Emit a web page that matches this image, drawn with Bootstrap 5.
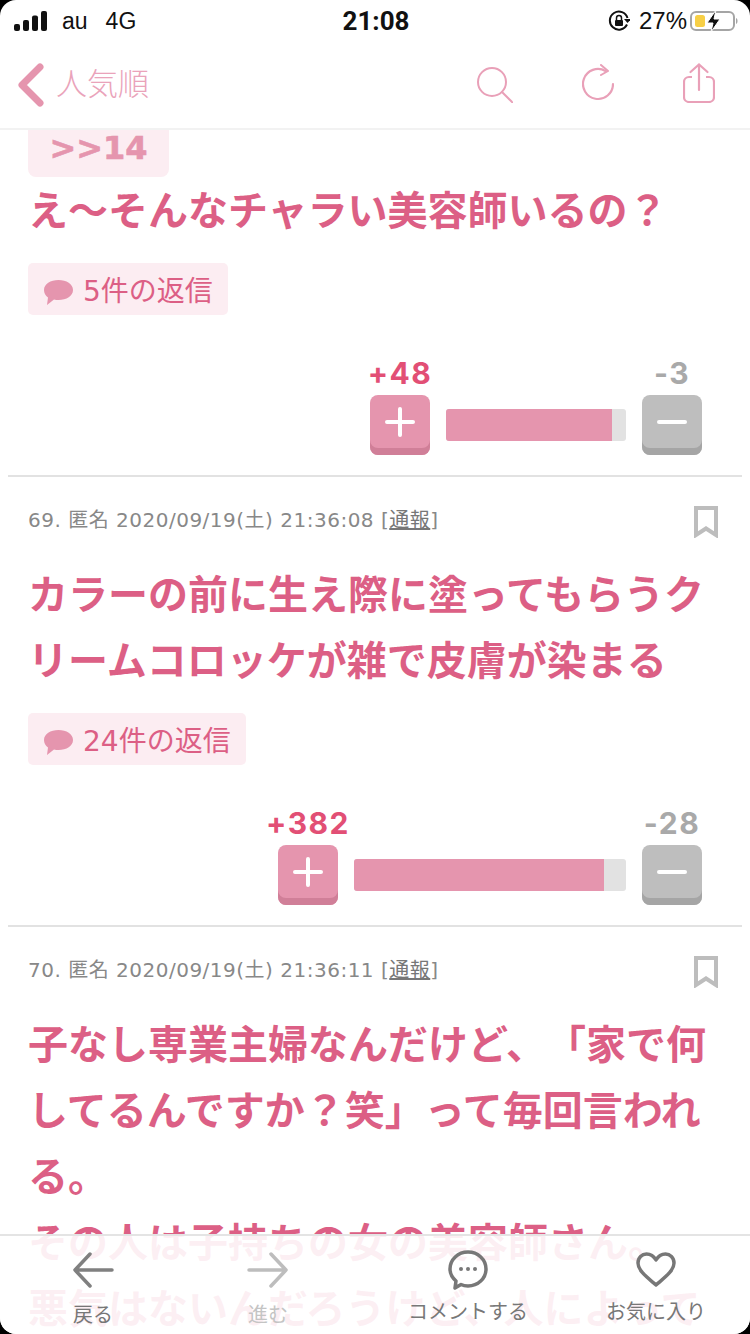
<!DOCTYPE html>
<html lang="ja">
<head>
    <meta charset="UTF-8">
    <meta name="viewport" content="width=device-width, initial-scale=1.0">
    <title>人気順</title>
    <link href="https://cdn.jsdelivr.net/npm/bootstrap@5.3.0/dist/css/bootstrap.min.css" rel="stylesheet">
    <style>
        body {
            background: #000;
            font-family: "Liberation Sans", "Noto Sans CJK JP", sans-serif;
            text-spacing-trim: space-all;
        }
        .screen { width: 750px; height: 1334px; border-radius: 16px; }
        .status-bar { height: 42px; padding: 0 12px 0 14px; font-size: 23px; color: #111; }
        .status-left, .status-right { width: 300px; }
        .status-carrier { margin-left: 14px; }
        .status-net { margin-left: 18px; }
        .status-time { font-size: 26px; font-weight: 700; font-family: Roboto, sans-serif; }
        .status-pct { font-size: 24px; margin: 0 3px 0 9px; }
        .top-nav { height: 88px; padding: 0 35px 0 18px; border-bottom: 2px solid #f2f2f2; }
        .top-title { font-size: 31px; font-weight: 300; color: #eaa3ba; margin-left: 12px; }
        .top-icons { gap: 69px; }
        .icon-raised { margin-bottom: 5px; }
        .post-list { margin: 0 8px; }
        .quote-chip {
            width: 141px; height: 58px; margin: -11px 0 0 0;
            background: #fcedf2; border-radius: 0 0 8px 8px;
            color: #e595ae; font: 700 32px "DejaVu Sans", sans-serif;
            -webkit-text-stroke: .6px #e595ae;
        }
        .post-item { padding: 0 40px 20px 20px; border-bottom: 2px solid #e2e2e2; }
        .post-item:last-child { border-bottom: 0; }
        .post-meta { height: 85px; font: 20px "DejaVu Sans", "Noto Sans CJK JP", sans-serif; color: #888; margin-right: -16px; }
        .post-meta span { letter-spacing: .5px; padding-bottom: 2px; }
        .post-meta u { color: #777; }
        .post-mark { margin-top: 5px; }
        .post-body {
            width: 690px; font-size: 40px; line-height: 66px; font-weight: 700; color: #dc5f85;
            margin: 0;
        }
        .post-first { padding-top: 1px; }
        .reply-chip {
            height: 52px; margin-top: 19px; padding: 6px 15px 0 16px; gap: 10px;
            background: #fcedf2; border-radius: 5px; color: #dc5f85;
            font: 28px "DejaVu Sans", "Noto Sans CJK JP", sans-serif;
        }
        .reply-chip span { margin-bottom: 6px; }
        .vote-row { margin-top: 43px; gap: 16px; }
        .vote-col { width: 60px; }
        .vote-count { height: 30px; margin: 0 -20px; font: 700 30px/30px Inter, sans-serif; letter-spacing: 1.5px; white-space: nowrap; }
        .vote-count.up { color: #e24f75; }
        .vote-count.down { color: #a9a9a9; }
        .vote-btn { width: 60px; height: 60px; margin-top: 7px; border-radius: 8px; padding-bottom: 6px; }
        .vote-btn.up { background: #e595ae; box-shadow: inset 0 -7px 0 #d07f98; }
        .vote-btn.down { background: #bebebe; box-shadow: inset 0 -7px 0 #a5a5a5; }
        .vote-track { height: 32px; margin-bottom: 14px; background: #e2e2e2; border-radius: 3px; }
        .vote-fill { height: 100%; background: #e595ae; border-radius: 3px 0 0 3px; }
        .bottom-bar {
            left: 0; right: 0; bottom: 0; height: 100px;
            background: rgba(255, 255, 255, .9);
            border-top: 2px solid #e4e4e4;
            display: grid; grid-template-columns: 186px 164px 236px 140px;
        }
        .tab-item { padding-top: 12px; font-size: 20px; line-height: 24px; color: #777; }
        .tab-item.off { color: #c4c4c4; }
        .tab-icon { height: 44px; margin-bottom: 8px; }
        .tab-item.low .tab-icon { margin-bottom: 11px; }
    </style>
</head>
<body>
    <div class="screen position-relative overflow-hidden bg-white d-flex flex-column">
        <div class="status-bar d-flex align-items-center justify-content-between flex-shrink-0">
            <div class="status-left d-flex align-items-center">
                <svg width="34" height="20" viewBox="0 0 34 20"><g fill="#111"><rect x="0" y="13" width="6" height="7" rx="2"/><rect x="9" y="9" width="6" height="11" rx="2"/><rect x="18" y="4.500" width="6" height="15.500" rx="2"/><rect x="27" y="0" width="6" height="20" rx="2"/></g></svg>
                <span class="status-carrier">au</span><span class="status-net">4G</span>
            </div>
            <div class="status-time">21:08</div>
            <div class="status-right d-flex align-items-center justify-content-end">
                <svg width="22" height="22" viewBox="0 0 22 22"><path d="M19 14.500A9 9 0 1 1 19.500 8" fill="none" stroke="#111" stroke-width="2"/><path d="M16 9h7l-3.500 4z" fill="#111"/><rect x="7" y="10" width="8" height="6" rx="1" fill="#111"/><path d="M8.500 10V8a2.500 2.500 0 0 1 5 0v2" fill="none" stroke="#111" stroke-width="1.500"/></svg>
                <span class="status-pct">27%</span>
                <svg width="48" height="24" viewBox="0 0 48 24"><rect x="1" y="3" width="43" height="18" rx="5" fill="none" stroke="#a5a5a5" stroke-width="2"/><rect x="5" y="6" width="10" height="12" rx="2.500" fill="#f7cf46"/><path d="M46 9c2 .5 2 5.500 0 6z" fill="#a5a5a5"/><path d="M26 1 17 14h6l-2 9 9-13h-6l2-9z" fill="#111" stroke="#fff" stroke-width="1"/></svg>
            </div>
        </div>

        <nav class="top-nav d-flex align-items-center justify-content-between flex-shrink-0">
            <div class="d-flex align-items-center">
                <svg width="26" height="44" viewBox="0 0 26 44"><path d="M22 4 4 22l18 18" fill="none" stroke="#e595ae" stroke-width="7" stroke-linecap="round" stroke-linejoin="round"/></svg>
                <span class="top-title">人気順</span>
            </div>
            <div class="top-icons d-flex align-items-center">
                <svg width="36" height="36" viewBox="0 0 36 36"><circle cx="15" cy="15" r="14" fill="none" stroke="#e9a0b8" stroke-width="2"/><path d="M25 25l10.500 10.500" stroke="#e9a0b8" stroke-width="2" stroke-linecap="round"/></svg>
                <svg class="icon-raised" width="32" height="37" viewBox="0 0 32 37"><path d="M23.500 7A15 15 0 1 0 31 20" fill="none" stroke="#e9a0b8" stroke-width="2.200" stroke-linecap="round"/><path d="M19 1l7 6-7 4" fill="none" stroke="#e9a0b8" stroke-width="2" stroke-linecap="round" stroke-linejoin="round"/></svg>
                <svg class="icon-raised" width="32" height="40" viewBox="0 0 32 40"><path d="M9 14H6a5 5 0 0 0-5 5v15a5 5 0 0 0 5 5h20a5 5 0 0 0 5-5V19a5 5 0 0 0-5-5h-3" fill="none" stroke="#e9a0b8" stroke-width="2.200"/><path d="M16 27V1.500M7.500 9 16 1.500 24.500 9" fill="none" stroke="#e9a0b8" stroke-width="2.200" stroke-linecap="round"/></svg>
            </div>
        </nav>

        <main class="flex-grow-1 overflow-hidden">
            <div class="post-list">
                <article class="post-item">
                    <div class="quote-chip d-flex align-items-center justify-content-center">&gt;&gt;14</div>
                    <p class="post-body post-first">え〜そんなチャラい美容師いるの？</p>
                    <div class="d-flex"><div class="reply-chip d-inline-flex align-items-center">
                        <svg width="29" height="25" viewBox="0 0 29 25"><path d="M14.500 0C22.500 0 29 4 29 10s-6.500 10-14.500 10c-1.500 0-3 0-4.500-.5L3 25l1-7.500C1.500 15.500 0 13 0 10 0 4 6.500 0 14.500 0z" fill="#e595ae"/></svg>
                        <span>5件の返信</span>
                    </div></div>
                    <div class="vote-row d-flex justify-content-end align-items-end">
                        <div class="vote-col text-center">
                            <div class="vote-count up">+48</div>
                            <div class="vote-btn up d-flex align-items-center justify-content-center"><svg width="30" height="30" viewBox="0 0 30 30"><path d="M15 2v26M2 15h26" stroke="#fff" stroke-width="4" stroke-linecap="round"/></svg></div>
                        </div>
                        <div class="vote-track" style="width:180px"><div class="vote-fill" style="width:92.2%"></div></div>
                        <div class="vote-col text-center">
                            <div class="vote-count down">-3</div>
                            <div class="vote-btn down d-flex align-items-center justify-content-center"><svg width="30" height="30" viewBox="0 0 30 30"><path d="M2 15h26" stroke="#fff" stroke-width="4" stroke-linecap="round"/></svg></div>
                        </div>
                    </div>
                </article>

                <article class="post-item">
                    <div class="post-meta d-flex align-items-center justify-content-between">
                        <span>69. 匿名 2020/09/19(土) 21:36:08 [<u>通報</u>]</span>
                        <svg class="post-mark" width="24" height="32" viewBox="0 0 24 32"><path d="M2 2h20v27L12 22.500 2 29z" fill="none" stroke="#bdbdbd" stroke-width="4"/></svg>
                    </div>
                    <p class="post-body">カラーの前に生え際に塗ってもらうクリームコロッケが雑で皮膚が染まる</p>
                    <div class="d-flex"><div class="reply-chip d-inline-flex align-items-center">
                        <svg width="29" height="25" viewBox="0 0 29 25"><path d="M14.500 0C22.500 0 29 4 29 10s-6.500 10-14.500 10c-1.500 0-3 0-4.500-.5L3 25l1-7.500C1.500 15.500 0 13 0 10 0 4 6.500 0 14.500 0z" fill="#e595ae"/></svg>
                        <span>24件の返信</span>
                    </div></div>
                    <div class="vote-row d-flex justify-content-end align-items-end">
                        <div class="vote-col text-center">
                            <div class="vote-count up">+382</div>
                            <div class="vote-btn up d-flex align-items-center justify-content-center"><svg width="30" height="30" viewBox="0 0 30 30"><path d="M15 2v26M2 15h26" stroke="#fff" stroke-width="4" stroke-linecap="round"/></svg></div>
                        </div>
                        <div class="vote-track" style="width:272px"><div class="vote-fill" style="width:91.9%"></div></div>
                        <div class="vote-col text-center">
                            <div class="vote-count down">-28</div>
                            <div class="vote-btn down d-flex align-items-center justify-content-center"><svg width="30" height="30" viewBox="0 0 30 30"><path d="M2 15h26" stroke="#fff" stroke-width="4" stroke-linecap="round"/></svg></div>
                        </div>
                    </div>
                </article>

                <article class="post-item">
                    <div class="post-meta d-flex align-items-center justify-content-between">
                        <span>70. 匿名 2020/09/19(土) 21:36:11 [<u>通報</u>]</span>
                        <svg class="post-mark" width="24" height="32" viewBox="0 0 24 32"><path d="M2 2h20v27L12 22.500 2 29z" fill="none" stroke="#bdbdbd" stroke-width="4"/></svg>
                    </div>
                    <p class="post-body">子なし専業主婦なんだけど、「家で何してるんですか？笑」って毎回言われる。<br>その人は子持ちの女の美容師さん。<br>悪気はないんだろうけど、人によって</p>
                </article>
            </div>
        </main>

        <footer class="bottom-bar position-absolute">
            <div class="tab-item low d-flex flex-column align-items-center">
                <div class="tab-icon d-flex align-items-center"><svg width="42" height="36" viewBox="0 0 42 36"><path d="M40 18H3M18 2 3 18l15 16" fill="none" stroke="#808080" stroke-width="3.500" stroke-linecap="round" stroke-linejoin="round"/></svg></div>
                <span>戻る</span>
            </div>
            <div class="tab-item low off d-flex flex-column align-items-center">
                <div class="tab-icon d-flex align-items-center"><svg width="42" height="36" viewBox="0 0 42 36"><path d="M2 18h37M24 2l15 16-15 16" fill="none" stroke="#bdbdbd" stroke-width="3.500" stroke-linecap="round" stroke-linejoin="round"/></svg></div>
                <span>進む</span>
            </div>
            <div class="tab-item d-flex flex-column align-items-center">
                <div class="tab-icon d-flex align-items-center"><svg width="40" height="40" viewBox="0 0 40 40"><path d="M20 2c10 0 18 7.500 18 17s-8 17-18 17c-3 0-5-.5-7-1.500L7 38l1-7C4 27.500 2 23.500 2 19 2 9.500 10 2 20 2z" fill="none" stroke="#777" stroke-width="3.500" stroke-linejoin="round"/><circle cx="13" cy="19" r="2" fill="#777"/><circle cx="20" cy="19" r="2" fill="#777"/><circle cx="27" cy="19" r="2" fill="#777"/></svg></div>
                <span>コメントする</span>
            </div>
            <div class="tab-item d-flex flex-column align-items-center">
                <div class="tab-icon d-flex align-items-center"><svg width="40" height="36" viewBox="0 0 40 36"><path d="M20 33C12 26 2 19 2 11 2 5.500 6 2 10.500 2c4 0 7.500 2.500 9.500 6 2-3.500 5.500-6 9.500-6C34 2 38 5.500 38 11c0 8-10 15-18 22z" fill="none" stroke="#777" stroke-width="3.500" stroke-linejoin="round"/></svg></div>
                <span>お気に入り</span>
            </div>
        </footer>
    </div>
    <script src="https://cdn.jsdelivr.net/npm/bootstrap@5.3.0/dist/js/bootstrap.bundle.min.js"></script>
</body>
</html>
